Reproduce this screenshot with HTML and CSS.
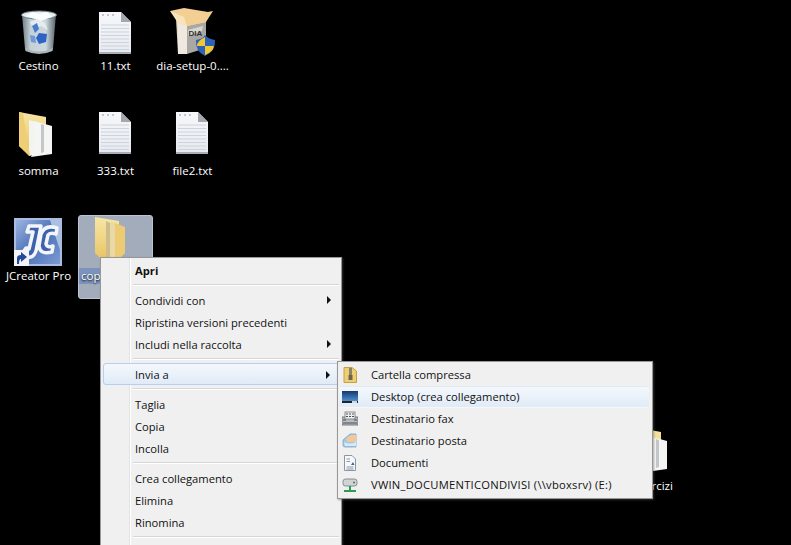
FILE: index.html
```html
<!DOCTYPE html>
<html lang="it">
<head>
<meta charset="utf-8">
<title>Desktop</title>
<link rel="stylesheet" href="styles.css">
</head>
<body>
<svg class="defs" width="0" height="0" aria-hidden="true">
  <defs>
    <linearGradient id="paper" x1="0" y1="0" x2="0" y2="1"><stop offset="0" stop-color="#f6f8fb"/><stop offset="1" stop-color="#e6e9ef"/></linearGradient>
    <linearGradient id="fold" x1="0" y1="0" x2="0" y2="1"><stop offset="0" stop-color="#f8e6a6"/><stop offset="1" stop-color="#e7c25e"/></linearGradient>
    <linearGradient id="bin" x1="0" y1="0" x2="1" y2="0"><stop offset="0" stop-color="#6f7c84"/><stop offset=".25" stop-color="#c4d2d8"/><stop offset=".7" stop-color="#cbd8de"/><stop offset="1" stop-color="#56626a"/></linearGradient>
    <linearGradient id="jc" x1="0" y1="0" x2="1" y2="1"><stop offset="0" stop-color="#9db4e0"/><stop offset=".5" stop-color="#4b72b8"/><stop offset="1" stop-color="#7d9bd2"/></linearGradient>
    <linearGradient id="screen" x1="0" y1="0" x2="0" y2="1"><stop offset="0" stop-color="#13386e"/><stop offset="1" stop-color="#4d8ed0"/></linearGradient>
    <symbol id="txt" viewBox="0 0 32 42">
      <path d="M0 0H22L32 10V42H0Z" fill="url(#paper)"/>
      <path d="M2 13H30M2 16.500H30M2 20H30M2 23.500H30M2 27H30M2 30.500H30M2 34H30M2 37.500H30" stroke="#cdd3dd" stroke-width="1"/>
      <path d="M22 0V10H32Z" fill="#a3a7ae"/>
      <path d="M3 3H18" stroke="#b4b8be" stroke-width="1.500" stroke-dasharray="2 3"/>
      <path d="M0 41H32" stroke="#a8adb4" stroke-width="2"/>
    </symbol>
    <symbol id="folder" viewBox="0 0 34 48">
      <path d="M0 0L27 5V36L10 44L0 34Z" fill="url(#fold)"/>
      <path d="M10 8L17 10V42L10 44Z" fill="#f3f3f0"/>
      <path d="M15 9L33 14V42L12 45L15 36Z" fill="#f5f5f3"/>
      <path d="M22 12L25 13V40L22 41Z" fill="#c4c7ca"/>
      <path d="M0 0L4 1L11 44L0 34Z" fill="#efcf75"/>
    </symbol>
  </defs>
</svg>

<main class="desktop">
  <div class="icon-grid">
    <div class="item">
      <svg class="glyph glyph-bin" viewBox="0 0 36 44">
        <path d="M1 4L4 39Q18 46 32 39L35 4Z" fill="url(#bin)"/>
        <ellipse cx="18" cy="5" rx="17.500" ry="4" fill="#e6eef0" stroke="#6d7a80"/>
        <path d="M5 6L12 2L18 4L26 2L31 7L20 11Z" fill="#fbfcfc"/>
        <path d="M9 12L16 9L24 13L27 20L20 16L12 18Z" fill="#e4ecef"/>
        <path d="M11 16L16 13L18 19L14 23Z" fill="#4a7bcf"/>
        <path d="M18 23L26 24L25 32L18 34L15 28Z" fill="#2f62c4"/>
        <path d="M9 25L14 26L15 33L10 32Z" fill="#6f98d8"/>
        <path d="M4 38Q18 45 32 38L31.500 41Q18 47 4.500 41Z" fill="#aab4b9"/>
      </svg>
      <span class="label">Cestino</span>
    </div>
    <div class="item">
      <svg class="glyph glyph-txt"><use href="#txt"/></svg>
      <span class="label">11.txt</span>
    </div>
    <div class="item">
      <svg class="glyph glyph-box" viewBox="0 0 46 48">
        <path d="M6 10L36 14V40L8 46Z" fill="#e8dcc8"/>
        <path d="M8 15L17 18V46L8 46Z" fill="#efe9df"/>
        <path d="M17 18L36 14V40L17 46Z" fill="#a9a8a4"/>
        <path d="M18 22L33 18L32 23L18 28Z" fill="#d9d6ce"/>
        <text class="box-text" x="18.500" y="28" font-size="8">DIA</text>
        <path d="M0 3L14 0L38 4L43 3L36 14L17 18Z" fill="#f3cf93"/>
        <path d="M0 3L8 15L17 18L14 9Z" fill="#f9e3bb"/>
        <path d="M26 32Q33 31 35 27Q38 31 45 32Q46 43 35 48Q25 43 26 32Z" fill="#2c63b8"/>
        <path d="M35 29V38H27Q27 33 35 29ZM35 38H44Q43 44 35 47Z" fill="#f2c72f"/>
      </svg>
      <span class="label">dia-setup-0....</span>
    </div>
    <div class="item">
      <svg class="glyph glyph-folder"><use href="#folder"/></svg>
      <span class="label">somma</span>
    </div>
    <div class="item">
      <svg class="glyph glyph-txt glyph-low"><use href="#txt"/></svg>
      <span class="label">333.txt</span>
    </div>
    <div class="item">
      <svg class="glyph glyph-txt glyph-low"><use href="#txt"/></svg>
      <span class="label">file2.txt</span>
    </div>
    <div class="item">
      <svg class="glyph glyph-jc" viewBox="0 0 48 48">
        <rect width="48" height="48" fill="#a9bde3"/>
        <rect x="2" y="2" width="44" height="44" fill="url(#jc)"/>
        <path d="M36 2H46V32Z" fill="#aebfe4"/>
        <path d="M8 36L12 30L15 31L19 14H13L15 8H27L22 33Q19 41 12 39Z" fill="#3d62ac" stroke="#f2f5fa" stroke-width="3.500" stroke-linejoin="round"/>
        <path d="M43 10Q31 6 27 16L25 28Q26 37 38 34L39 28Q33 30 32 26L34 17Q36 14 42 16Z" fill="#3d62ac" stroke="#f2f5fa" stroke-width="3.500" stroke-linejoin="round"/>
        <rect y="32" width="15" height="16" fill="#f4f4f4"/>
        <path d="M3 46V40Q3 37 7 37V34L13 39L7 44V41Q5 41 5 46Z" fill="#234a9a"/>
      </svg>
      <span class="label">JCreator Pro</span>
    </div>
    <div class="item item-selected">
      <svg class="glyph glyph-open" viewBox="0 0 30 48">
        <path d="M0 0L24 4V46H10L0 36Z" fill="url(#fold)"/>
        <path d="M11 4L15 6V46H11Z" fill="#cdbd8c"/>
        <path d="M15 5L21 6V40L15 46Z" fill="#e8d9a6"/>
        <path d="M20 6L30 10V36L20 46Z" fill="#eccb73"/>
      </svg>
      <span class="label label-selected">copia</span>
    </div>
  </div>

  <div class="item item-far">
    <svg class="glyph glyph-folder"><use href="#folder"/></svg>
    <span class="label">esercizi</span>
  </div>

  <nav class="menu menu-main">
    <div class="row row-bold">Apri</div>
    <hr class="sep">
    <div class="row row-more">Condividi con</div>
    <div class="row">Ripristina versioni precedenti</div>
    <div class="row row-more">Includi nella raccolta</div>
    <hr class="sep">
    <div class="row row-more row-active">Invia a</div>
    <hr class="sep">
    <div class="row">Taglia</div>
    <div class="row">Copia</div>
    <div class="row">Incolla</div>
    <hr class="sep">
    <div class="row">Crea collegamento</div>
    <div class="row">Elimina</div>
    <div class="row">Rinomina</div>
    <hr class="sep">
  </nav>

  <nav class="menu menu-sub">
    <div class="sub-row">
      <svg class="mini" viewBox="0 0 16 16"><path d="M2 .500H10L14.500 4V15.500H2Z" fill="#efcf72" stroke="#c5a04a"/><path d="M7 1H10V9H7Z" fill="#8c8363"/><path d="M6.500 8H10.500V13H6.500Z" fill="#6b6450"/></svg>
      <span>Cartella compressa</span>
    </div>
    <div class="sub-row sub-active">
      <svg class="mini" viewBox="0 0 16 16"><rect y="2" width="16" height="10" fill="url(#screen)"/><rect y="12" width="16" height="2" fill="#20242a"/><rect x="10" y="12" width="5" height="2" fill="#d8d8d8"/></svg>
      <span>Desktop (crea collegamento)</span>
    </div>
    <div class="sub-row">
      <svg class="mini" viewBox="0 0 16 16"><rect y="6" width="16" height="8" fill="#b9bcc0" stroke="#5c6066" stroke-width=".8"/><rect x="3" y="1" width="10" height="7" fill="#eef0f2" stroke="#777" stroke-width=".8"/><path d="M4 3H6M7 3H9M10 3H12M4 5.500H6M7 5.500H9M10 5.500H12M1 9H4M12 9H15M1 12H15" stroke="#4a5058" stroke-width="1.200"/></svg>
      <span>Destinatario fax</span>
    </div>
    <div class="sub-row">
      <svg class="mini" viewBox="0 0 16 16"><path d="M1 7L8 1H14V14H3Q1 14 1 12Z" fill="#9fc7ea" stroke="#7ea4c8" stroke-width=".8"/><path d="M4 6Q8 1 14 2V9H5Z" fill="#f2c89a"/><path d="M2 9Q8 12 14 9V13H3Z" fill="#dbe9f4"/></svg>
      <span>Destinatario posta</span>
    </div>
    <div class="sub-row">
      <svg class="mini" viewBox="0 0 16 16"><path d="M2.500 .500H10L13.500 4V15.500H2.500Z" fill="#f7f8fa" stroke="#8a96a6"/><path d="M4.500 4H8M4.500 6.500H8M4.500 12H11.500M4.500 14H11.500" stroke="#8a96a6"/><path d="M9 10L11 7L12.500 10Z" fill="#44648c"/></svg>
      <span>Documenti</span>
    </div>
    <div class="sub-row">
      <svg class="mini" viewBox="0 0 16 16"><rect x="1" y="2" width="14" height="7" rx="2.500" fill="#cfd4d4" stroke="#6f7a7a" stroke-width=".8"/><circle cx="12" cy="5.500" r="1" fill="#5c6868"/><path d="M8 9V13M2 14H14" stroke="#2c9c50" stroke-width="2"/></svg>
      <span class="caps">VWIN_DOCUMENTICONDIVISI (\\vboxsrv) (E:)</span>
    </div>
  </nav>
</main>
</body>
</html>
```
FILE: styles.css
```css
html, body {
  margin: 0;
  height: 100%;
  background: #000;
  overflow: hidden;
}

.defs {
  position: absolute;
}

.desktop {
  position: relative;
  width: 791px;
  height: 545px;
  overflow: hidden;
  background: #000;
  font-family: "Open Sans", "Noto Sans", sans-serif;
  font-size: 11.500px;
}

.icon-grid {
  display: grid;
  grid-template-columns: repeat(3, 77px);
  grid-auto-rows: 105px;
  padding-top: 5px;
}

.item {
  display: flex;
  flex-direction: column;
  align-items: center;
  height: 84px;
  box-sizing: border-box;
  position: relative;
}

.glyph {
  display: block;
  flex: none;
}

.label {
  position: absolute;
  top: 53px;
  white-space: nowrap;
  color: #fff;
  line-height: 16px;
  text-shadow: 0 1px 2px #000;
}

.glyph-bin {
  width: 36px;
  height: 44px;
  margin-top: 5px;
}

.glyph-txt {
  width: 32px;
  height: 42px;
  margin-top: 7px;
  margin-right: 2px;
}

.glyph-box {
  width: 46px;
  height: 48px;
  margin-top: 3px;
}

.glyph-folder {
  width: 34px;
  height: 48px;
  margin-top: 2px;
  margin-right: 5px;
}

.glyph-low {
  margin-top: 2px;
}

.glyph-jc {
  width: 48px;
  height: 48px;
  margin-top: 3px;
  margin-right: 2px;
}

.glyph-open {
  width: 30px;
  height: 48px;
  margin-top: 1px;
  margin-right: 12px;
}

.box-text {
  font-family: "Liberation Sans", sans-serif;
  font-weight: 700;
  fill: #333;
}

.item-selected {
  width: 75px;
  margin-left: 1px;
  background: #a3acba;
  border: 1px solid #bcc4d0;
  border-radius: 3px;
}

.label-selected {
  left: 0;
  top: 52px;
  padding: 0 2px;
  background: #7c93bd;
}

.item-far {
  position: absolute;
  left: 630px;
  top: 425px;
  width: 46px;
}

.menu {
  position: absolute;
  box-sizing: border-box;
  background: #f0f0f0;
  border: 1px solid #979797;
  color: #111;
  box-shadow: 1px 1px 2px rgba(90, 90, 90, .5);
  font-size: 11.200px;
}

.menu-main {
  left: 100px;
  top: 257px;
  width: 242px;
  height: 300px;
  padding: 1px 1px 1px 2px;
  background: linear-gradient(90deg, #f0f0f0 28px, #e2e3e3 28px, #e2e3e3 29px, #fff 29px, #fff 30px, #f0f0f0 30px);
}

.row {
  position: relative;
  height: 22px;
  padding-left: 32px;
  line-height: 24px;
}

.row-bold {
  font-weight: 700;
}

.row-more::after {
  content: "";
  position: absolute;
  right: 9px;
  top: 7px;
  border-left: 4px solid #111;
  border-top: 4px solid transparent;
  border-bottom: 4px solid transparent;
}

.row-active,
.sub-active {
  box-sizing: border-box;
  border: 1px solid #b4d0ec;
  border-radius: 3px;
  background: linear-gradient(#f4f8fc, #e0ebf7);
}

.row-active {
  padding-left: 31px;
  line-height: 22px;
}

.sep {
  margin: 3px 1px 3px 30px;
  border: 0;
  border-top: 1px solid #d7d7d7;
  border-bottom: 1px solid #fff;
  box-sizing: content-box;
  height: 0;
  padding: 0;
}

.menu-sub {
  left: 337px;
  top: 361px;
  width: 316px;
  height: 138px;
  padding: 2px 2px 2px 1px;
}

.sub-row {
  box-sizing: border-box;
  display: flex;
  align-items: center;
  height: 22px;
  padding-left: 2px;
  border: 1px solid transparent;
  border-radius: 3px;
  margin-right: 1px;
}

.sub-row span {
  margin-top: -2px;
}

.mini {
  width: 16px;
  height: 16px;
  flex: none;
  margin-right: 13px;
}

.caps {
  letter-spacing: .25px;
}
```
